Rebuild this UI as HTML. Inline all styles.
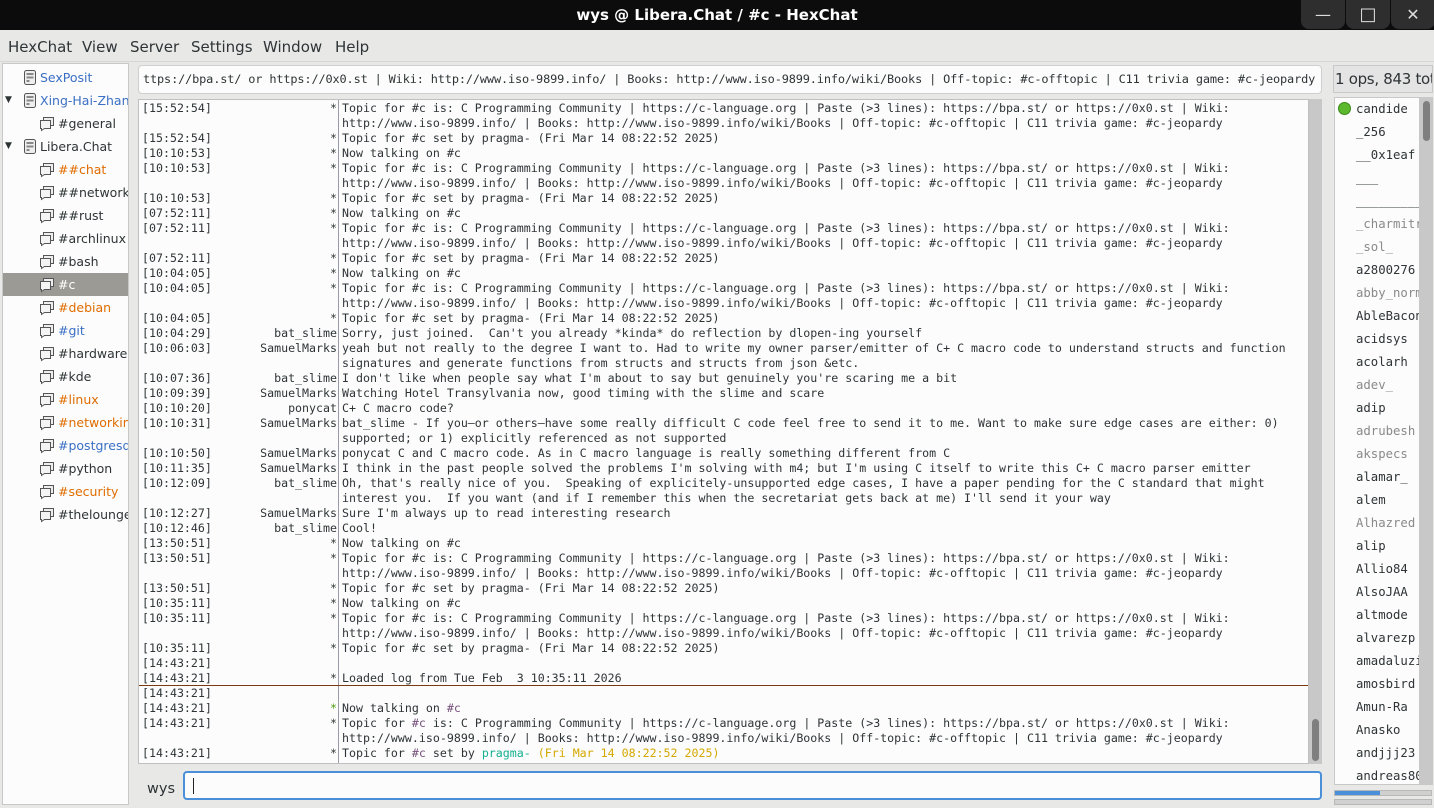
<!DOCTYPE html>
<html><head><meta charset="utf-8"><style>
*{margin:0;padding:0;box-sizing:border-box}
body{width:1434px;height:808px;overflow:hidden;background:#e8e8e7;font-family:"DejaVu Sans","Liberation Sans",sans-serif;color:#2e3436;position:relative}
.title{position:absolute;left:0;top:0;width:1434px;height:30px;background:#0c0c0c;color:#fff;font-weight:bold;font-size:15px;text-align:center;line-height:30px}
.wb{position:absolute;top:0;width:44px;height:29px;background:#2e2e2e;border-radius:0 0 8px 8px;color:#ddd;text-align:center;line-height:29px;font-size:16px}
.menu{position:absolute;top:30px;left:0;width:1434px;height:32px;border-bottom:1px solid #d6d6d6;font-size:15px}
.menu span{position:absolute;top:8px}
.tree{position:absolute;left:2px;top:63px;width:127px;height:742px;background:#fcfcfc;border:1px solid #c8c8c8;font-size:12.5px;overflow:hidden}
.ti{position:absolute;height:23px;line-height:23px;white-space:nowrap;left:0;width:125px}
.ti svg{position:absolute;top:4px}
.mono{font-family:"DejaVu Sans Mono","Liberation Mono",monospace}
.topic{position:absolute;left:138px;top:65px;width:1184px;height:29px;background:#fcfcfc;border:1px solid #cfcfcf;border-radius:4px;font-size:11.9px;letter-spacing:-0.14px;line-height:27px;padding-left:4px;white-space:nowrap;overflow:hidden}
.chat{position:absolute;left:138px;top:99px;width:1171px;height:665px;background:#fcfcfc;border:1px solid #c0c0c0;overflow:hidden;font-size:11.62px}
.sep{position:absolute;left:199px;top:0;width:1px;height:665px;background:#9a9aa8}
.r{position:absolute;left:0;height:15px;line-height:15px;white-space:pre;width:1170px}
.ts{position:absolute;left:3px}
.nk{position:absolute;right:972px;text-align:right}
.tx{position:absolute;left:203px}
.sb{position:absolute;left:1309px;top:99px;width:13px;height:665px;background:#c8c8c8}
.ul{position:absolute;left:1334px;top:97px;width:86px;height:688px;background:#fcfcfc;border:1px solid #c8c8c8;font-size:12.3px;overflow:hidden}
.u{position:absolute;left:21px;white-space:nowrap;height:23px;line-height:23px}
.g{color:#8a8a8a}
</style></head><body>
<div class="title">wys @ Libera.Chat / #c - HexChat</div>
<div class="wb" style="left:1301px">&#8212;</div>
<div class="wb" style="left:1346px;font-size:18px">&#9633;</div>
<div class="wb" style="left:1391px">&#10005;</div>
<div class="menu"><span style="left:8px">HexChat</span><span style="left:82px">View</span><span style="left:130px">Server</span><span style="left:191px">Settings</span><span style="left:263px">Window</span><span style="left:335px">Help</span></div>

<div class="tree">
<svg width="0" height="0" style="position:absolute"><defs>
<g id="srv"><rect x="1.5" y="0.5" width="11" height="14" rx="2" fill="#eee" stroke="#555"/><rect x="3.5" y="3" width="7" height="2" fill="#888"/><rect x="3.5" y="6.5" width="7" height="2" fill="#888"/><rect x="3.5" y="10" width="3" height="2" fill="#888"/></g>
<g id="ch"><path d="M4.5 1.5h10v8h-10z" fill="#eee" stroke="#555"/><path d="M1.5 4.5h10v8h-6l-3 2v-2h-1z" fill="#f4f4f4" stroke="#555"/></g>
</defs></svg>
<div class="ti" style="top:2px"><svg style="left:20px" width="15" height="16"><use href="#srv"/></svg><span style="position:absolute;left:37px;color:#3a6fc4">SexPosit</span></div>
<div class="ti" style="top:25px"><span style="position:absolute;left:2px;font-size:9px">&#9660;</span><svg style="left:20px" width="15" height="16"><use href="#srv"/></svg><span style="position:absolute;left:37px;color:#3a6fc4">Xing-Hai-Zhang</span></div>
<div class="ti" style="top:48px"><svg style="left:36px" width="16" height="16"><use href="#ch"/></svg><span style="position:absolute;left:55px">#general</span></div>
<div class="ti" style="top:71px"><span style="position:absolute;left:2px;font-size:9px">&#9660;</span><svg style="left:20px" width="15" height="16"><use href="#srv"/></svg><span style="position:absolute;left:37px">Libera.Chat</span></div>
<div class="ti" style="top:94px"><svg style="left:36px" width="16" height="16"><use href="#ch"/></svg><span style="position:absolute;left:55px;color:#e06c00">##chat</span></div>
<div class="ti" style="top:117px"><svg style="left:36px" width="16" height="16"><use href="#ch"/></svg><span style="position:absolute;left:55px">##networking</span></div>
<div class="ti" style="top:140px"><svg style="left:36px" width="16" height="16"><use href="#ch"/></svg><span style="position:absolute;left:55px">##rust</span></div>
<div class="ti" style="top:163px"><svg style="left:36px" width="16" height="16"><use href="#ch"/></svg><span style="position:absolute;left:55px">#archlinux</span></div>
<div class="ti" style="top:186px"><svg style="left:36px" width="16" height="16"><use href="#ch"/></svg><span style="position:absolute;left:55px">#bash</span></div>
<div class="ti" style="top:209px;background:#9c9a94"><svg style="left:36px" width="16" height="16"><use href="#ch"/></svg><span style="position:absolute;left:55px;color:#fff">#c</span></div>
<div class="ti" style="top:232px"><svg style="left:36px" width="16" height="16"><use href="#ch"/></svg><span style="position:absolute;left:55px;color:#e06c00">#debian</span></div>
<div class="ti" style="top:255px"><svg style="left:36px" width="16" height="16"><use href="#ch"/></svg><span style="position:absolute;left:55px;color:#3a6fc4">#git</span></div>
<div class="ti" style="top:278px"><svg style="left:36px" width="16" height="16"><use href="#ch"/></svg><span style="position:absolute;left:55px">#hardware</span></div>
<div class="ti" style="top:301px"><svg style="left:36px" width="16" height="16"><use href="#ch"/></svg><span style="position:absolute;left:55px">#kde</span></div>
<div class="ti" style="top:324px"><svg style="left:36px" width="16" height="16"><use href="#ch"/></svg><span style="position:absolute;left:55px;color:#e06c00">#linux</span></div>
<div class="ti" style="top:347px"><svg style="left:36px" width="16" height="16"><use href="#ch"/></svg><span style="position:absolute;left:55px;color:#e06c00">#networking</span></div>
<div class="ti" style="top:370px"><svg style="left:36px" width="16" height="16"><use href="#ch"/></svg><span style="position:absolute;left:55px;color:#3a6fc4">#postgresql</span></div>
<div class="ti" style="top:393px"><svg style="left:36px" width="16" height="16"><use href="#ch"/></svg><span style="position:absolute;left:55px">#python</span></div>
<div class="ti" style="top:416px"><svg style="left:36px" width="16" height="16"><use href="#ch"/></svg><span style="position:absolute;left:55px;color:#e06c00">#security</span></div>
<div class="ti" style="top:439px"><svg style="left:36px" width="16" height="16"><use href="#ch"/></svg><span style="position:absolute;left:55px">#thelounge</span></div>
</div>

<div class="topic mono">ttps://bpa.st/ or https://0x0.st | Wiki: http://www.iso-9899.info/ | Books: http://www.iso-9899.info/wiki/Books | Off-topic: #c-offtopic | C11 trivia game: #c-jeopardy</div>

<div class="chat mono">
<div class="sep"></div>
<div class="r" style="top:1px"><span class="ts">[15:52:54]</span><span class="nk">*</span><span class="tx">Topic for #c is: C Programming Community | https://c-language.org | Paste (&gt;3 lines): https://bpa.st/ or https://0x0.st | Wiki:
http://www.iso-9899.info/ | Books: http://www.iso-9899.info/wiki/Books | Off-topic: #c-offtopic | C11 trivia game: #c-jeopardy</span></div>
<div class="r" style="top:31px"><span class="ts">[15:52:54]</span><span class="nk">*</span><span class="tx">Topic for #c set by pragma- (Fri Mar 14 08:22:52 2025)</span></div>
<div class="r" style="top:46px"><span class="ts">[10:10:53]</span><span class="nk">*</span><span class="tx">Now talking on #c</span></div>
<div class="r" style="top:61px"><span class="ts">[10:10:53]</span><span class="nk">*</span><span class="tx">Topic for #c is: C Programming Community | https://c-language.org | Paste (&gt;3 lines): https://bpa.st/ or https://0x0.st | Wiki:
http://www.iso-9899.info/ | Books: http://www.iso-9899.info/wiki/Books | Off-topic: #c-offtopic | C11 trivia game: #c-jeopardy</span></div>
<div class="r" style="top:91px"><span class="ts">[10:10:53]</span><span class="nk">*</span><span class="tx">Topic for #c set by pragma- (Fri Mar 14 08:22:52 2025)</span></div>
<div class="r" style="top:106px"><span class="ts">[07:52:11]</span><span class="nk">*</span><span class="tx">Now talking on #c</span></div>
<div class="r" style="top:121px"><span class="ts">[07:52:11]</span><span class="nk">*</span><span class="tx">Topic for #c is: C Programming Community | https://c-language.org | Paste (&gt;3 lines): https://bpa.st/ or https://0x0.st | Wiki:
http://www.iso-9899.info/ | Books: http://www.iso-9899.info/wiki/Books | Off-topic: #c-offtopic | C11 trivia game: #c-jeopardy</span></div>
<div class="r" style="top:151px"><span class="ts">[07:52:11]</span><span class="nk">*</span><span class="tx">Topic for #c set by pragma- (Fri Mar 14 08:22:52 2025)</span></div>
<div class="r" style="top:166px"><span class="ts">[10:04:05]</span><span class="nk">*</span><span class="tx">Now talking on #c</span></div>
<div class="r" style="top:181px"><span class="ts">[10:04:05]</span><span class="nk">*</span><span class="tx">Topic for #c is: C Programming Community | https://c-language.org | Paste (&gt;3 lines): https://bpa.st/ or https://0x0.st | Wiki:
http://www.iso-9899.info/ | Books: http://www.iso-9899.info/wiki/Books | Off-topic: #c-offtopic | C11 trivia game: #c-jeopardy</span></div>
<div class="r" style="top:211px"><span class="ts">[10:04:05]</span><span class="nk">*</span><span class="tx">Topic for #c set by pragma- (Fri Mar 14 08:22:52 2025)</span></div>
<div class="r" style="top:226px"><span class="ts">[10:04:29]</span><span class="nk">bat_slime</span><span class="tx">Sorry, just joined.  Can't you already *kinda* do reflection by dlopen-ing yourself</span></div>
<div class="r" style="top:241px"><span class="ts">[10:06:03]</span><span class="nk">SamuelMarks</span><span class="tx">yeah but not really to the degree I want to. Had to write my owner parser/emitter of C+ C macro code to understand structs and function
signatures and generate functions from structs and structs from json &amp;etc.</span></div>
<div class="r" style="top:271px"><span class="ts">[10:07:36]</span><span class="nk">bat_slime</span><span class="tx">I don't like when people say what I'm about to say but genuinely you're scaring me a bit</span></div>
<div class="r" style="top:286px"><span class="ts">[10:09:39]</span><span class="nk">SamuelMarks</span><span class="tx">Watching Hotel Transylvania now, good timing with the slime and scare</span></div>
<div class="r" style="top:301px"><span class="ts">[10:10:20]</span><span class="nk">ponycat</span><span class="tx">C+ C macro code?</span></div>
<div class="r" style="top:316px"><span class="ts">[10:10:31]</span><span class="nk">SamuelMarks</span><span class="tx">bat_slime - If you—or others—have some really difficult C code feel free to send it to me. Want to make sure edge cases are either: 0)
supported; or 1) explicitly referenced as not supported</span></div>
<div class="r" style="top:346px"><span class="ts">[10:10:50]</span><span class="nk">SamuelMarks</span><span class="tx">ponycat C and C macro code. As in C macro language is really something different from C</span></div>
<div class="r" style="top:361px"><span class="ts">[10:11:35]</span><span class="nk">SamuelMarks</span><span class="tx">I think in the past people solved the problems I'm solving with m4; but I'm using C itself to write this C+ C macro parser emitter</span></div>
<div class="r" style="top:376px"><span class="ts">[10:12:09]</span><span class="nk">bat_slime</span><span class="tx">Oh, that's really nice of you.  Speaking of explicitely-unsupported edge cases, I have a paper pending for the C standard that might
interest you.  If you want (and if I remember this when the secretariat gets back at me) I'll send it your way</span></div>
<div class="r" style="top:406px"><span class="ts">[10:12:27]</span><span class="nk">SamuelMarks</span><span class="tx">Sure I'm always up to read interesting research</span></div>
<div class="r" style="top:421px"><span class="ts">[10:12:46]</span><span class="nk">bat_slime</span><span class="tx">Cool!</span></div>
<div class="r" style="top:436px"><span class="ts">[13:50:51]</span><span class="nk">*</span><span class="tx">Now talking on #c</span></div>
<div class="r" style="top:451px"><span class="ts">[13:50:51]</span><span class="nk">*</span><span class="tx">Topic for #c is: C Programming Community | https://c-language.org | Paste (&gt;3 lines): https://bpa.st/ or https://0x0.st | Wiki:
http://www.iso-9899.info/ | Books: http://www.iso-9899.info/wiki/Books | Off-topic: #c-offtopic | C11 trivia game: #c-jeopardy</span></div>
<div class="r" style="top:481px"><span class="ts">[13:50:51]</span><span class="nk">*</span><span class="tx">Topic for #c set by pragma- (Fri Mar 14 08:22:52 2025)</span></div>
<div class="r" style="top:496px"><span class="ts">[10:35:11]</span><span class="nk">*</span><span class="tx">Now talking on #c</span></div>
<div class="r" style="top:511px"><span class="ts">[10:35:11]</span><span class="nk">*</span><span class="tx">Topic for #c is: C Programming Community | https://c-language.org | Paste (&gt;3 lines): https://bpa.st/ or https://0x0.st | Wiki:
http://www.iso-9899.info/ | Books: http://www.iso-9899.info/wiki/Books | Off-topic: #c-offtopic | C11 trivia game: #c-jeopardy</span></div>
<div class="r" style="top:541px"><span class="ts">[10:35:11]</span><span class="nk">*</span><span class="tx">Topic for #c set by pragma- (Fri Mar 14 08:22:52 2025)</span></div>
<div class="r" style="top:556px"><span class="ts">[14:43:21]</span></div>
<div class="r" style="top:571px"><span class="ts">[14:43:21]</span><span class="nk">*</span><span class="tx">Loaded log from Tue Feb  3 10:35:11 2026</span></div>
<div style="position:absolute;left:0;top:585px;width:1171px;height:1px;background:#7a3a10"></div>
<div class="r" style="top:586px"><span class="ts">[14:43:21]</span></div>
<div class="r" style="top:601px"><span class="ts">[14:43:21]</span><span class="nk" style="color:#4e9a06">*</span><span class="tx">Now talking on <span style="color:#75507b">#c</span></span></div>
<div class="r" style="top:616px"><span class="ts">[14:43:21]</span><span class="nk">*</span><span class="tx">Topic for <span style="color:#75507b">#c</span> is: C Programming Community | https://c-language.org | Paste (&gt;3 lines): https://bpa.st/ or https://0x0.st | Wiki:
http://www.iso-9899.info/ | Books: http://www.iso-9899.info/wiki/Books | Off-topic: #c-offtopic | C11 trivia game: #c-jeopardy</span></div>
<div class="r" style="top:646px"><span class="ts">[14:43:21]</span><span class="nk">*</span><span class="tx">Topic for <span style="color:#75507b">#c</span> set by <span style="color:#14b090">pragma-</span> <span style="color:#d4a800">(Fri Mar 14 08:22:52 2025)</span></span></div>
</div>
<div class="sb"><div style="position:absolute;left:3px;top:620px;width:7px;height:42px;background:#7f7f7f;border-radius:4px"></div></div>

<div style="position:absolute;left:147px;top:781px;font-size:14.5px">wys</div>
<div style="position:absolute;left:183px;top:771px;width:1139px;height:29px;background:#fcfcfc;border:2px solid #4a90d9;border-radius:4px"><div style="position:absolute;left:8px;top:5px;width:1px;height:16px;background:#222"></div></div>

<div style="position:absolute;left:1333px;top:65px;width:100px;height:28px;border:1px solid #c8c8c8;background:#e4e4e4;font-size:15px;line-height:26px;white-space:nowrap;overflow:hidden;padding-left:1px;letter-spacing:-0.3px">1 ops, 843 total</div>
<div class="ul mono">
<div style="position:absolute;left:3px;top:4px;width:13px;height:13px;border-radius:50%;background:#5cb82c;border:1px solid #3a8a1a"></div>
<div class="u" style="top:0px">candide</div>
<div class="u" style="top:23px">_256</div>
<div class="u" style="top:46px">__0x1eaf</div>
<div class="u" style="top:69px">___</div>
<div class="u" style="top:92px">__________</div>
<div class="u g" style="top:115px">_charmitro</div>
<div class="u g" style="top:138px">_sol_</div>
<div class="u" style="top:161px">a2800276</div>
<div class="u g" style="top:184px">abby_norm</div>
<div class="u" style="top:207px">AbleBacon</div>
<div class="u" style="top:230px">acidsys</div>
<div class="u" style="top:253px">acolarh</div>
<div class="u g" style="top:276px">adev_</div>
<div class="u" style="top:299px">adip</div>
<div class="u g" style="top:322px">adrubesh</div>
<div class="u g" style="top:345px">akspecs</div>
<div class="u" style="top:368px">alamar_</div>
<div class="u" style="top:391px">alem</div>
<div class="u g" style="top:414px">Alhazred</div>
<div class="u" style="top:437px">alip</div>
<div class="u" style="top:460px">Allio84</div>
<div class="u" style="top:483px">AlsoJAA</div>
<div class="u" style="top:506px">altmode</div>
<div class="u" style="top:529px">alvarezp</div>
<div class="u" style="top:552px">amadaluzia</div>
<div class="u" style="top:575px">amosbird</div>
<div class="u" style="top:598px">Amun-Ra</div>
<div class="u" style="top:621px">Anasko</div>
<div class="u" style="top:644px">andjjj23</div>
<div class="u" style="top:667px">andreas80</div>
</div>
<div style="position:absolute;left:1420px;top:97px;width:13px;height:688px;background:#c8c8c8"><div style="position:absolute;left:3px;top:4px;width:7px;height:40px;background:#7f7f7f;border-radius:4px"></div></div>
<div style="position:absolute;left:1334px;top:790px;width:98px;height:6px;background:#d0d0d0;border:1px solid #b8b8b8"><div style="width:45px;height:4px;background:#4a90d9"></div></div>
<div style="position:absolute;left:1334px;top:799px;width:98px;height:6px;background:#d0d0d0;border:1px solid #b8b8b8"></div>
</body></html>
